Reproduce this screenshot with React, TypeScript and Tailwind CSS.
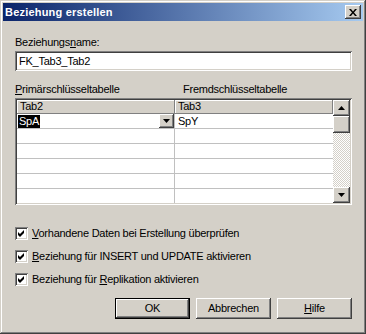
import React from "react";

const raised =
  "shadow-[inset_-1px_-1px_#404040,inset_1px_1px_#ffffff,inset_-2px_-2px_#808080,inset_2px_2px_#d4d0c8]";
const sunken =
  "shadow-[inset_1px_1px_#808080,inset_-1px_-1px_#ffffff,inset_2px_2px_#404040,inset_-2px_-2px_#d4d0c8]";

const Check = () => (
  <div className={`w-[13px] h-[13px] bg-white flex items-center justify-center ${sunken}`}>
    <svg width="7" height="7" viewBox="0 0 7 7">
      <path d="M0 2 L2 4 L6 0 L6 3 L2 7 L0 5 Z" fill="#000" />
    </svg>
  </div>
);

const Arrow = ({ up }: { up?: boolean }) => (
  <svg width="7" height="4" viewBox="0 0 7 4">
    <path d={up ? "M3.5 0 L7 4 L0 4 Z" : "M0 0 L7 0 L3.5 4 Z"} fill="#000" />
  </svg>
);

const Option = ({ children }: { children: React.ReactNode }) => (
  <div className="flex items-center gap-[4px] h-[13px]">
    <Check />
    <span>{children}</span>
  </div>
);

const Button = ({ children, primary }: { children: React.ReactNode; primary?: boolean }) => (
  <button
    className={`w-[75px] h-[21px] bg-[#d4d0c8] flex items-center justify-center ${
      primary
        ? "shadow-[inset_0_0_0_1px_#000000,inset_-2px_-2px_#404040,inset_2px_2px_#ffffff,inset_-3px_-3px_#808080]"
        : raised
    }`}
  >
    {children}
  </button>
);

export default function App() {
  return (
    <div
      className="w-[366px] h-[334px] bg-[#d4d0c8] p-[3px] flex flex-col text-[11px] leading-[13px] text-black shadow-[inset_-1px_-1px_#404040,inset_1px_1px_#d4d0c8,inset_-2px_-2px_#808080,inset_2px_2px_#ffffff]"
      style={{ fontFamily: '"Liberation Sans", Arial, sans-serif' }}
    >
      {/* title bar */}
      <div className="h-[18px] flex items-center justify-between pl-[2px] pr-[2px] bg-[linear-gradient(to_right,#0a246a,#a6caf0)]">
        <span className="text-white font-bold text-[11px] tracking-[0.2px]">Beziehung erstellen</span>
        <div className={`w-[16px] h-[14px] bg-[#d4d0c8] flex items-center justify-center ${raised}`}>
          <svg width="8" height="7" viewBox="0 0 8 7">
            <path d="M0 0 L2 0 L4 2.5 L6 0 L8 0 L5 3.5 L8 7 L6 7 L4 4.5 L2 7 L0 7 L3 3.5 Z" fill="#000" />
          </svg>
        </div>
      </div>

      <div className="flex flex-col pl-[12px] w-[349px] pt-[15px] tracking-[-0.25px]">
        <div className="h-[13px]">
          Beziehungs<u>n</u>ame:
        </div>
        <div className={`mt-[2px] h-[20px] bg-white flex items-center px-[4px] ${sunken}`}>FK_Tab3_Tab2</div>

        <div className="mt-[12px] h-[13px] flex">
          <span className="w-[168px]">
            <u>P</u>rimärschlüsseltabelle
          </span>
          <span>Fremdschlüsseltabelle</span>
        </div>

        {/* grid */}
        <div className={`mt-[2px] h-[107px] p-[2px] bg-white flex ${sunken}`}>
          <div className="flex-1 flex flex-col overflow-hidden">
            <div className="h-[14px] flex bg-[#d4d0c8]">
              <div className="w-[158px] px-[3px] flex items-center border-r border-b border-[#808080] shadow-[inset_1px_1px_#ffffff]">
                Tab2
              </div>
              <div className="flex-1 px-[3px] flex items-center border-r border-b border-[#808080] shadow-[inset_1px_1px_#ffffff]">
                Tab3
              </div>
            </div>
            <div className="h-[16px] flex border-b border-[#c0c0c0]">
              <div className="w-[158px] flex items-center justify-between border-r border-[#c0c0c0] pl-[1px]">
                <span className="bg-black text-white px-[1px]">SpA</span>
                <div className={`w-[15px] h-[14px] bg-[#d4d0c8] flex items-center justify-center ${raised}`}>
                  <Arrow />
                </div>
              </div>
              <div className="flex-1 flex items-center px-[3px]">SpY</div>
            </div>
            {[0, 1, 2, 3, 4].map((i) => (
              <div key={i} className="h-[15px] shrink-0 flex border-b border-[#c0c0c0]">
                <div className="w-[158px] border-r border-[#c0c0c0]" />
                <div className="flex-1" />
              </div>
            ))}
          </div>
          <div className="w-[17px] flex flex-col">
            <div className={`h-[16px] bg-[#d4d0c8] flex items-center justify-center ${raised}`}>
              <Arrow up />
            </div>
            <div className={`h-[17px] bg-[#d4d0c8] ${raised}`} />
            <div className="flex-1 bg-[repeating-conic-gradient(#ffffff_0_25%,#d4d0c8_0_50%)] bg-[length:2px_2px]" />
            <div className={`h-[16px] bg-[#d4d0c8] flex items-center justify-center ${raised}`}>
              <Arrow />
            </div>
          </div>
        </div>

        <div className="mt-[22px] flex flex-col gap-[10px]">
          <Option>
            <u>V</u>orhandene Daten bei Erstellung überprüfen
          </Option>
          <Option>
            <u>B</u>eziehung für INSERT und UPDATE aktivieren
          </Option>
          <Option>
            Beziehung für <u>R</u>eplikation aktivieren
          </Option>
        </div>

        <div className="mt-[12px] flex justify-end gap-[6px]">
          <Button primary>OK</Button>
          <Button>Abbrechen</Button>
          <Button>
            <u>H</u>ilfe
          </Button>
        </div>
      </div>
    </div>
  );
}
